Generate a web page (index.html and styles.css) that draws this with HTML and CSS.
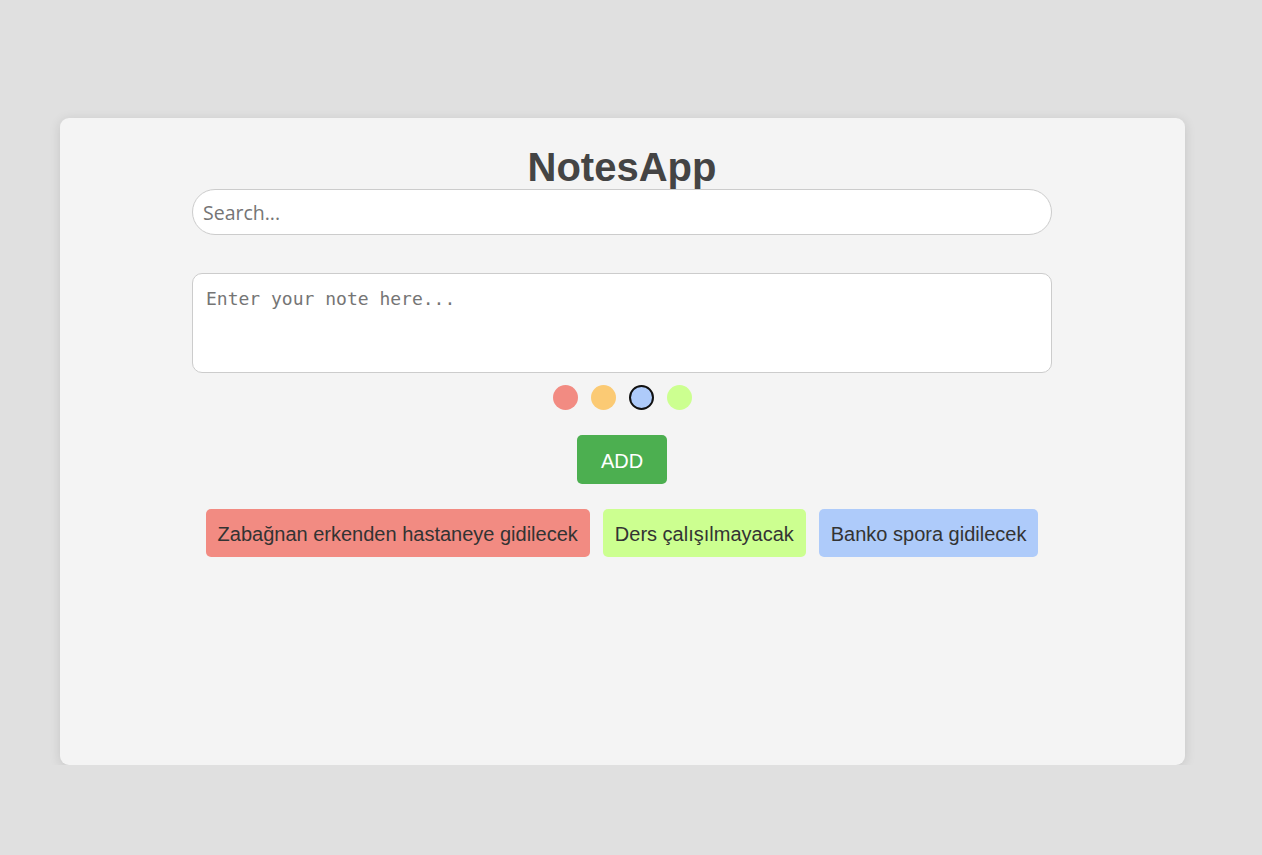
FILE: index.html
```html
<!DOCTYPE html>
<html lang="tr">
<head>
<meta charset="utf-8">
<title>NotesApp</title>
<link rel="stylesheet" href="styles.css">
</head>
<body>
<div class="card">
  <h1 class="title">NotesApp</h1>
  <input class="search" type="text" placeholder="Search...">
  <textarea class="note-input" placeholder="Enter your note here..."></textarea>
  <div class="colors">
    <span class="dot red"></span>
    <span class="dot orange"></span>
    <span class="dot blue selected"></span>
    <span class="dot green"></span>
  </div>
  <button class="add-btn">ADD</button>
  <div class="notes">
    <div class="note red">Zabağnan erkenden hastaneye gidilecek</div>
    <div class="note green">Ders çalışılmayacak</div>
    <div class="note blue">Banko spora gidilecek</div>
  </div>
</div>
</body>
</html>
```

FILE: styles.css
```css
html, body {
  margin: 0;
  padding: 0;
  background: #e0e0e0;
  font-family: "Liberation Sans", Arial, sans-serif;
}

body {
  padding: 118px 0 0 60px;
}

.card {
  box-sizing: border-box;
  width: 1125px;
  height: 647px;
  background: #f4f4f4;
  border-radius: 9px;
  box-shadow: 0 2px 12px rgba(0, 0, 0, 0.12);
  padding-top: 27px;
  padding-right: 1px;
  display: flex;
  flex-direction: column;
  align-items: center;
}

.title {
  margin: 0;
  font-size: 40px;
  line-height: 44px;
  font-weight: bold;
  color: #444;
}

.search {
  box-sizing: border-box;
  width: 860px;
  height: 46px;
  border: 1px solid #ccc;
  border-radius: 23px;
  padding: 0 10px;
  font-family: "Open Sans", sans-serif;
  font-size: 19.5px;
  color: #333;
  background: #fff;
  outline: none;
}

.search::placeholder {
  color: #757575;
}

.note-input {
  box-sizing: border-box;
  width: 860px;
  height: 100px;
  margin-top: 38px;
  border: 1px solid #ccc;
  border-radius: 10px;
  padding: 14px 13px 10px;
  font-family: "DejaVu Sans Mono", monospace;
  font-size: 18px;
  background: #fff;
  resize: none;
  outline: none;
}

.note-input::placeholder {
  color: #757575;
}

.colors {
  display: flex;
  gap: 13px;
  margin-top: 12px;
}

.dot {
  box-sizing: border-box;
  width: 25px;
  height: 25px;
  border-radius: 50%;
  display: block;
}

.dot.selected {
  border: 2px solid #111;
}

.red { background: #f28b82; }
.orange { background: #fbca74; }
.blue { background: #aecbfa; }
.green { background: #ccff90; }

.add-btn {
  margin-top: 25px;
  border: none;
  border-radius: 5px;
  background: #4caf50;
  color: #fff;
  font-family: "Liberation Sans", Arial, sans-serif;
  font-size: 20px;
  line-height: 23px;
  padding: 15px 24px 11px;
}

.notes {
  display: flex;
  gap: 13px;
  margin-top: 25px;
}

.note {
  border-radius: 5px;
  padding: 13px 12px 11px;
  font-size: 20px;
  line-height: 24px;
  color: #333;
}
```
